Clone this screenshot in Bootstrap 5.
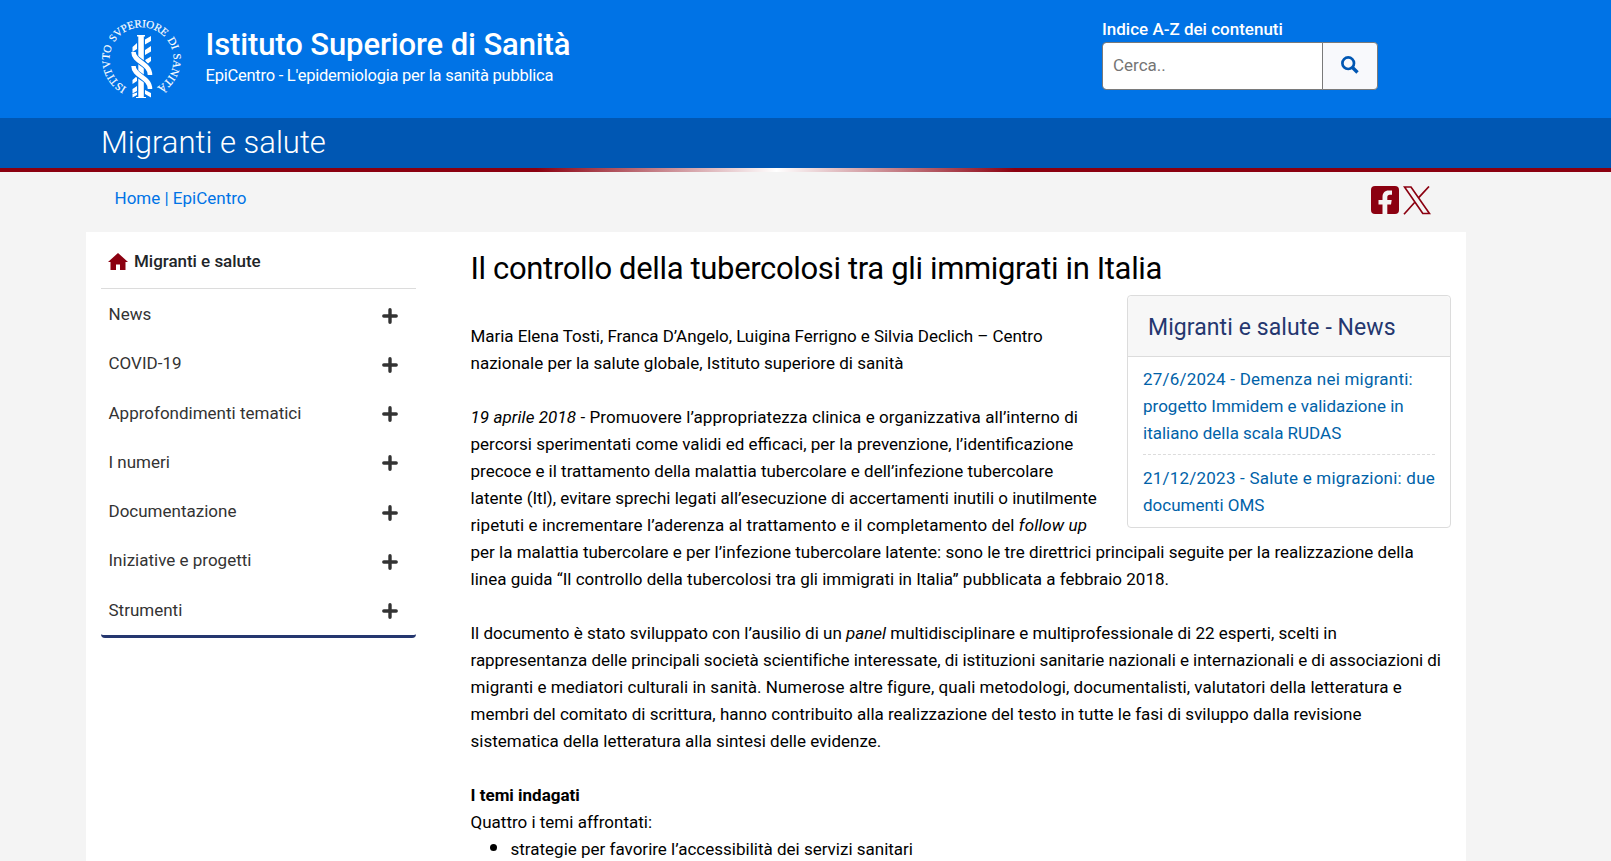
<!DOCTYPE html>
<html lang="it">
<head>
<meta charset="utf-8">
<meta name="viewport" content="width=device-width, initial-scale=1">
<title>Il controllo della tubercolosi tra gli immigrati in Italia</title>
<link href="https://cdn.jsdelivr.net/npm/bootstrap@5.3.0/dist/css/bootstrap.min.css" rel="stylesheet">
<style>
body{font-family:Roboto,"Noto Sans",sans-serif;font-size:17px;line-height:27px;color:#000;background:#f4f4f4;overflow:hidden}
a{text-decoration:none}
.page-wrap{width:1380px;margin-left:86px;padding:0 15px}
.top-bar{background:#0073e6;height:118px}
.logo-iss{width:84px;height:84px;margin:16.500px 0 0 -1px}
.brand-text{margin:26px 0 0 21.500px}
.brand-title{font-size:31px;font-weight:500;line-height:38px;letter-spacing:-.11px}
.brand-sub{font-size:16.5px;line-height:24px;letter-spacing:-.24px}
.search-box{width:276px;margin:16px 73px 0 auto}
.search-title{font-weight:500;line-height:26px}
.search-box .form-control{height:48px;border:1px solid #7a7a7a;border-radius:4px 0 0 4px;font-size:17px;padding:4px 10px 6px}
.search-box .form-control::placeholder{color:#757575}
.search-box .btn{width:56px;border:1px solid #7a7a7a;border-radius:0 4px 4px 0;background:#f8f9fc}
.search-box .btn svg{margin-bottom:2px}
.section-bar{background:#0057b3;height:50px}
.section-bar h2{font-size:31px;line-height:50px;font-weight:300;color:#fff}
.rule-bar{height:4px;background:linear-gradient(90deg,#8b0010 0,#8b0010 33.3%,#fff 48.2%,#8b0010 63%,#8b0010 100%)}
.crumb-bar{height:60px}
.crumb-bar .crumb{margin:13px 0 0 13.500px;color:#0073e6}
.social{gap:4px;margin:14px 20px 0 0}
.main-wrap{background:#fff;height:640px}
.side-nav{width:315px}
.side-head{height:57px;border-bottom:1px solid #dcdcdc;padding:16px 0 0 7px;font-weight:500;color:#212529}
.side-head span{margin-left:6px;letter-spacing:-.03px}
.side-list{border-bottom:3px solid #25376f;border-radius:0 0 4px 4px;padding-bottom:1px}
.side-list li{height:49.3px;padding:12px 18px 0 7.500px;color:#333}
.side-list svg{margin-top:6.500px}
.article{width:980.500px;margin-left:54.500px}
.article h1{font-size:31px;line-height:38px;margin:18px 0 7px;letter-spacing:-.35px}
.article p{white-space:nowrap;margin-bottom:27px}
.lead-p{padding-top:28px}
.tight{letter-spacing:-.05px}.loose{letter-spacing:.08px}.loose-sm{letter-spacing:.05px}
.news-card{width:324px;border-color:#dcdcdc;border-radius:4px}
.news-card .card-header{height:61px;background:#f7f7f7;font-size:23px;line-height:47px;padding:8px 20px;color:#25376f;border-color:#dcdcdc;letter-spacing:.08px}
.news-card .card-body{padding:9px 15px 8px}
.news-card a{display:block;color:#0062a8;white-space:nowrap}
.news-card a+a{border-top:1px dashed #dcdcdc;margin-top:7px;padding-top:10px}
.dated{letter-spacing:.22px}
.themes{padding-left:40px;margin-top:-2px}
.themes li::marker{font-size:23px}
</style>
</head>
<body>
<header class="top-bar text-white">
  <div class="page-wrap d-flex">
    <svg class="logo-iss flex-shrink-0" viewBox="0 0 84 84" fill="#fff">
      <path id="ring" fill="none" d="M26.500 70.500A32 32 0 1 1 56.500 70.500"/>
      <text font-family="'Liberation Serif',serif" font-size="11" stroke="#fff" stroke-width=".15" word-spacing="1.500" textLength="169"><textPath href="#ring">ISTITVTO SVPERIORE DI SANITÀ</textPath></text>
      <path d="M37 18H45V19.500H43.800V80H46V81H36V80H38.300V19.500H37Z"/>
      <path d="M45 22.500L51 19V24L45 27.500ZM45 33L51 29V34.500L45 38ZM37 26V32L32.500 35V30ZM45 43L51 39.500V44L47.500 47ZM37 59V64L32.500 67V63ZM45 63L51 66V69L45 66ZM37 69V74L32.500 76.500V72ZM37 75.500V78L32.500 80.500V77ZM45 73L51 76V80.500L45 77Z"/>
      <g fill="none"><path d="M33 36C34 45 50 46 50 57M33 50C34 60 50 60 50 71" stroke="#0073e6" stroke-width="6.500"/><path d="M33.500 35C33.500 45 50 46 50 58M33.500 49C33.500 59 50 60 50 72" stroke="#fff" stroke-width="4.500"/></g>
    </svg>
    <div class="brand-text">
      <div class="brand-title">Istituto Superiore di Sanità</div>
      <div class="brand-sub">EpiCentro - L'epidemiologia per la sanità pubblica</div>
    </div>
    <div class="search-box">
      <div class="search-title">Indice A-Z dei contenuti</div>
      <div class="input-group flex-nowrap">
        <input class="form-control" type="text" placeholder="Cerca..">
        <button class="btn d-flex align-items-center justify-content-center p-0" type="button" aria-label="Cerca">
          <svg width="18" height="18" viewBox="0 0 18 18" fill="none" stroke="#0057b3"><circle cx="7.200" cy="7.200" r="5.800" stroke-width="2.700"/><path d="M11.500 11.500L16.500 16.500" stroke-width="3.300"/></svg>
        </button>
      </div>
    </div>
  </div>
</header>
<div class="section-bar"><div class="page-wrap"><h2 class="m-0">Migranti e salute</h2></div></div>
<div class="rule-bar"></div>
<div class="crumb-bar page-wrap d-flex justify-content-between align-items-start">
  <div class="crumb">Home | EpiCentro</div>
  <div class="social d-flex">
    <svg width="28" height="28" viewBox="0 0 28 28"><rect width="28" height="28" rx="4" fill="#8b0010"/><path d="M11.500 28V18.500H7.500V14H11.500V11C11.500 7 13.800 4.500 17.600 4.500H21V8.800H18.700C17 8.800 16.300 9.700 16.300 11.200V14H20.700L20 18.500H16.300V28Z" fill="#f4f4f4"/></svg>
    <svg width="28" height="29" viewBox="0 0 28 29" fill="none" stroke="#8b0010" stroke-width="1.700"><path d="M1.500 1H8L26.500 27.500H19.800ZM26 .5L15 12.300M12 16L1 28.300"/></svg>
  </div>
</div>
<main class="page-wrap main-wrap d-flex align-items-start">
  <nav class="side-nav flex-shrink-0">
    <div class="side-head d-flex"><svg class="mt-1" width="20" height="20" viewBox="0 0 20 20"><path d="M10 1L20 10H17.500V18H12V12.500H8V18H2.500V10H0Z" fill="#8b0010"/></svg><span>Migranti e salute</span></div>
    <ul class="side-list list-unstyled m-0" id="sections"></ul>
  </nav>
  <article class="article">
    <h1 class="fw-normal">Il controllo della tubercolosi tra gli immigrati in Italia</h1>
    <aside class="card news-card float-end">
      <div class="card-header">Migranti e salute - News</div>
      <div class="card-body">
        <a href="#"><span class="dated">27/6/2024 - Demenza nei migranti:</span><br>progetto Immidem e validazione in<br>italiano della scala RUDAS</a>
        <a href="#"><span class="dated">21/12/2023 - Salute e migrazioni: due</span><br>documenti OMS</a>
      </div>
    </aside>
    <p class="lead-p"><span class="tight">Maria Elena Tosti, Franca D’Angelo, Luigina Ferrigno e Silvia Declich – Centro</span><br>nazionale per la salute globale, Istituto superiore di sanità</p>
    <p><span class="loose"><i>19 aprile 2018</i> - Promuovere l’appropriatezza clinica e organizzativa all’interno di</span><br>percorsi sperimentati come validi ed efficaci, per la prevenzione, l’identificazione<br>precoce e il trattamento della malattia tubercolare e dell’infezione tubercolare<br>latente (Itl), evitare sprechi legati all’esecuzione di accertamenti inutili o inutilmente<br><span class="loose">ripetuti e incrementare l’aderenza al trattamento e il completamento del <i>follow up</i></span><br>per la malattia tubercolare e per l’infezione tubercolare latente: sono le tre direttrici principali seguite per la realizzazione della<br>linea guida “Il controllo della tubercolosi tra gli immigrati in Italia” pubblicata a febbraio 2018.</p>
    <p>Il documento è stato sviluppato con l’ausilio di un <i>panel</i> multidisciplinare e multiprofessionale di 22 esperti, scelti in<br><span class="tight">rappresentanza delle principali società scientifiche interessate, di istituzioni sanitarie nazionali e internazionali e di associazioni di</span><br><span class="loose-sm">migranti e mediatori culturali in sanità. Numerose altre figure, quali metodologi, documentalisti, valutatori della letteratura e</span><br>membri del comitato di scrittura, hanno contribuito alla realizzazione del testo in tutte le fasi di sviluppo dalla revisione<br>sistematica della letteratura alla sintesi delle evidenze.</p>
    <p class="mb-0"><strong class="fw-bolder">I temi indagati</strong><br>Quattro i temi affrontati:</p>
    <ul class="themes mb-0"><li>strategie per favorire l’accessibilità dei servizi sanitari</li></ul>
  </article>
</main>
<script>
const sections=['News','COVID-19','Approfondimenti tematici','I numeri','Documentazione','Iniziative e progetti','Strumenti'];
document.getElementById('sections').innerHTML=sections.map(s=>`<li class="d-flex justify-content-between align-items-start"><span>${s}</span><svg width="16" height="16" viewBox="0 0 16 16" stroke="#333" stroke-width="3.400" stroke-linecap="round"><path d="M8 1.800V14.200M1.800 8H14.200"/></svg></li>`).join('');
</script>
<script src="https://cdn.jsdelivr.net/npm/bootstrap@5.3.0/dist/js/bootstrap.bundle.min.js"></script>
</body>
</html>
